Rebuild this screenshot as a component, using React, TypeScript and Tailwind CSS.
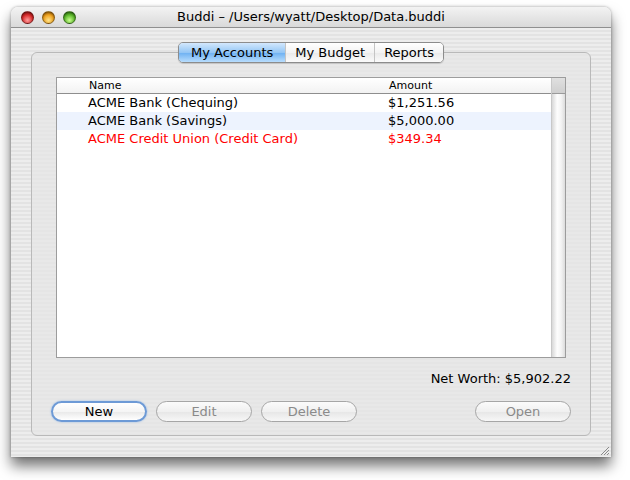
import React from "react";

// Mac OS X (Tiger-era) Buddi window: accounts list with aqua controls.
const FONT = "font-['DejaVu_Sans','Liberation_Sans',sans-serif]";

type Account = { name: string; amount: string; red?: boolean };

const ACCOUNTS: Account[] = [
  { name: "ACME Bank (Chequing)", amount: "$1,251.56" },
  { name: "ACME Bank (Savings)", amount: "$5,000.00" },
  { name: "ACME Credit Union (Credit Card)", amount: "$349.34", red: true },
];

function Light({ color }: { color: string }) {
  return (
    <span
      className={`inline-block h-[13px] w-[13px] rounded-full border border-black/40 shadow-[inset_0_1px_2px_rgba(0,0,0,0.35)] ${color}`}
    />
  );
}

function Tab({ label, active, last }: { label: string; active?: boolean; last?: boolean }) {
  return (
    <div
      className={`flex h-full items-center justify-center text-[13px] text-black ${
        last ? "" : "border-r border-[#c4c4c4]"
      } ${
        active
          ? "bg-[linear-gradient(#d3e8fd,#94c6f5_50%,#6cb0f2_51%,#b8ddfd)] px-[12px]"
          : "bg-[linear-gradient(#ffffff,#f3f3f3_50%,#e9e9e9_51%,#fbfbfb)] px-[9px]"
      }`}
    >
      {label}
    </div>
  );
}

function Button({ label, focused, disabled }: { label: string; focused?: boolean; disabled?: boolean }) {
  return (
    <button
      className={`h-[21px] w-[96px] rounded-full text-[13px] leading-none ${
        focused
          ? "border-2 border-[#6d9ad6] bg-[linear-gradient(#ffffff,#f5f5f5_50%,#e8e8e8_51%,#ffffff)] text-black shadow-[0_0_2px_#8fb6e8]"
          : "border border-[#a6a6a6] bg-[linear-gradient(#fbfbfb,#f0f0f0_50%,#e6e6e6_51%,#f7f7f7)]"
      } ${disabled ? "text-[#8a8a8a]" : ""}`}
    >
      {label}
    </button>
  );
}

export default function App() {
  return (
    <div className={`h-[480px] w-[630px] bg-white pl-[11px] pt-[7px] ${FONT}`}>
      <div className="flex h-[450px] w-[600px] flex-col overflow-hidden rounded-t-[7px] shadow-[0_9px_14px_rgba(0,0,0,0.55),0_0_3px_rgba(0,0,0,0.35)]">
        {/* title bar */}
        <div className="relative flex h-[21px] shrink-0 items-center justify-center border-b border-[#8f8f8f] bg-[linear-gradient(#f3f3f3,#d9d9d9)]">
          <div className="absolute left-[10px] top-[4px] flex gap-[8px]">
            <Light color="bg-[radial-gradient(circle_at_50%_75%,#ff9c9c,#d92b2b_55%,#8f1010)]" />
            <Light color="bg-[radial-gradient(circle_at_50%_75%,#ffe38a,#eea11d_55%,#a86205)]" />
            <Light color="bg-[radial-gradient(circle_at_50%_75%,#c9ff8f,#5cb82a_55%,#2d7410)]" />
          </div>
          <span className="text-[13px] text-black">Buddi – /Users/wyatt/Desktop/Data.buddi</span>
        </div>

        {/* body */}
        <div className="relative flex flex-1 flex-col bg-[repeating-linear-gradient(#ededed_0px,#ededed_2px,#e3e3e3_2px,#e3e3e3_4px)] px-[20px] pt-[14px]">
          <div className="z-10 flex justify-center">
            <div className="flex h-[21px] overflow-hidden rounded-[5px] border border-[#8c8c8c] shadow-[0_1px_1px_rgba(0,0,0,0.15)]">
              <Tab label="My Accounts" active />
              <Tab label="My Budget" />
              <Tab label="Reports" last />
            </div>
          </div>

          <div className="-mt-[11px] flex h-[384px] flex-col rounded-[6px] border border-[#b9b9b9] bg-[#e6e6e6]/70 px-[19px] pt-[24px]">
            {/* table */}
            <div className="mx-[5px] flex h-[281px] border border-[#9c9c9c] bg-white">
              <div className="flex flex-1 flex-col">
                <div className="flex h-[16px] items-end border-b border-[#8e8e8e] bg-[linear-gradient(#ffffff,#f2f2f2)] pb-[1px] text-[11px] leading-[13px] text-black">
                  <span className="w-[332px] pl-[32px]">Name</span>
                  <span>Amount</span>
                </div>
                {ACCOUNTS.map((a, i) => (
                  <div
                    key={a.name}
                    className={`flex h-[18px] items-center text-[13px] ${
                      i % 2 === 1 ? "bg-[#edf3fe]" : "bg-white"
                    } ${a.red ? "text-[#ff0000]" : "text-black"}`}
                  >
                    <span className="w-[331px] pl-[31px]">{a.name}</span>
                    <span>{a.amount}</span>
                  </div>
                ))}
              </div>
              <div className="flex w-[14px] flex-col border-l border-[#c8c8c8]">
                <div className="h-[16px] border-b border-[#9a9a9a] bg-[linear-gradient(#e0e0e0,#cfcfcf)]" />
                <div className="flex-1 bg-[linear-gradient(90deg,#d8d8d8,#fdfdfd_40%,#f4f4f4_70%,#dcdcdc)]" />
              </div>
            </div>

            <div className="mt-[11px] text-right text-[13px] text-black">Net Worth: $5,902.22</div>

            <div className="mt-[12px] flex items-center gap-[9px]">
              <Button label="New" focused />
              <Button label="Edit" disabled />
              <Button label="Delete" disabled />
              <div className="flex-1" />
              <Button label="Open" disabled />
            </div>
          </div>

          {/* resize grip */}
          <svg className="absolute bottom-[1px] right-[1px]" width="12" height="12" viewBox="0 0 12 12">
            <path d="M11 3 L3 11 M11 6 L6 11 M11 9 L9 11" stroke="#8a8a8a" strokeWidth="1" />
          </svg>
        </div>
      </div>
    </div>
  );
}
